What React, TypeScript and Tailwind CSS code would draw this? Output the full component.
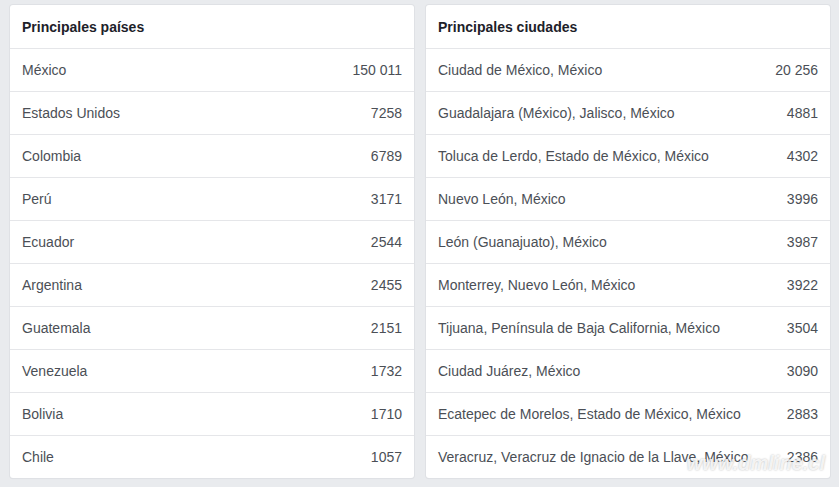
const paises: [string, string][] = [
  ['México', '150 011'],
  ['Estados Unidos', '7258'],
  ['Colombia', '6789'],
  ['Perú', '3171'],
  ['Ecuador', '2544'],
  ['Argentina', '2455'],
  ['Guatemala', '2151'],
  ['Venezuela', '1732'],
  ['Bolivia', '1710'],
  ['Chile', '1057'],
];

const ciudades: [string, string][] = [
  ['Ciudad de México, México', '20 256'],
  ['Guadalajara (México), Jalisco, México', '4881'],
  ['Toluca de Lerdo, Estado de México, México', '4302'],
  ['Nuevo León, México', '3996'],
  ['León (Guanajuato), México', '3987'],
  ['Monterrey, Nuevo León, México', '3922'],
  ['Tijuana, Península de Baja California, México', '3504'],
  ['Ciudad Juárez, México', '3090'],
  ['Ecatepec de Morelos, Estado de México, México', '2883'],
  ['Veracruz, Veracruz de Ignacio de la Llave, México', '2386'],
];

const Card = ({ title, rows }: { title: string; rows: [string, string][] }) => {
  return (
    <div className="flex-1 bg-white rounded-[3px] shadow-[0_0_0_1px_#dfe1e5,0_1px_1px_rgba(0,0,0,0.06)] flex flex-col">
      <div className="h-[43px] flex items-center pt-[2px] px-3 text-[14px] font-bold text-[#1d2129]">{title}</div>
      {rows.map(([name, value]) => (
        <div
          key={name}
          className="h-[43px] flex items-center justify-between px-3 border-t border-[#e5e6e9] text-[14px] text-[#4b4f56]"
        >
          <span>{name}</span>
          <span>{value}</span>
        </div>
      ))}
    </div>
  );
};

const App = () => {
  return (
    <div
      className="relative w-[839px] h-[487px] bg-[#e9ebee] pt-[5px] pl-[10px] pr-[9px] overflow-hidden"
      style={{ fontFamily: '"Liberation Sans", Arial, sans-serif' }}
    >
      <div className="flex gap-3 items-start">
        <Card title="Principales países" rows={paises} />
        <Card title="Principales ciudades" rows={ciudades} />
      </div>
      {/* watermark */}
      <div className="absolute right-[14px] bottom-[14px] text-[20px] leading-none italic font-bold text-white/80 [text-shadow:0_0_2px_rgba(0,0,0,0.3)]">
        www.dmline.cl
      </div>
    </div>
  );
};

export default App;
